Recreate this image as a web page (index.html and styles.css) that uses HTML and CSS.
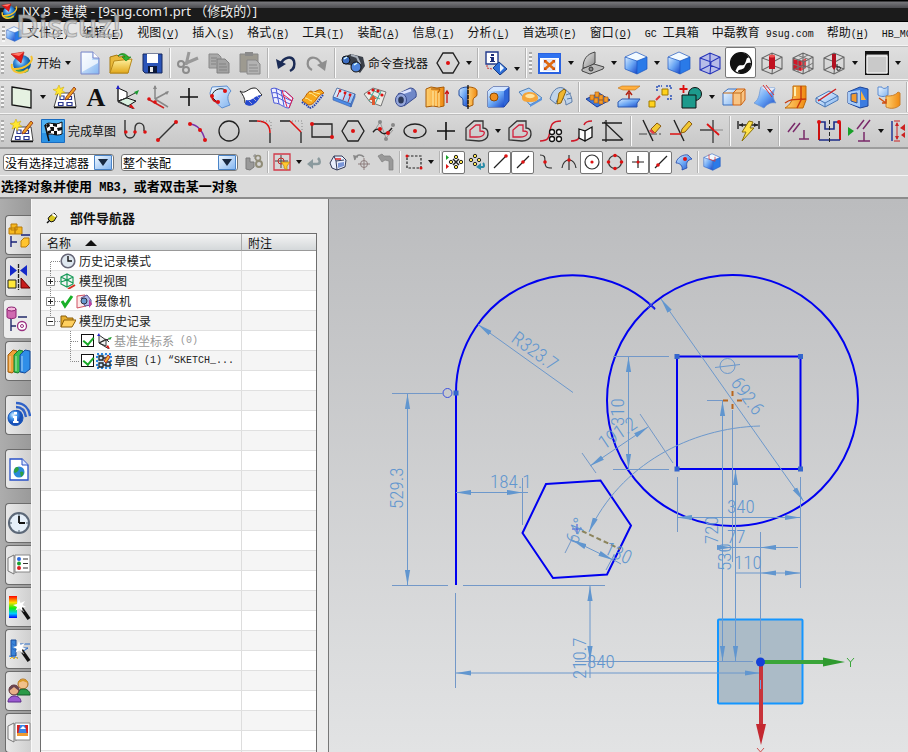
FILE: index.html
```html
<!DOCTYPE html>
<html lang="zh-CN">
<head>
<meta charset="utf-8">
<title>NX 8 - 建模</title>
<link rel="stylesheet" href="styles.css">
</head>
<body>
<svg class="defs" aria-hidden="true">
  <defs>
    <linearGradient id="gb" x1="0" y1="0" x2="1" y2="1"><stop offset="0" stop-color="#d8ecff"/><stop offset=".5" stop-color="#6aa6f4"/><stop offset="1" stop-color="#1746c8"/></linearGradient>
    <linearGradient id="gl" x1="0" y1="0" x2="1" y2="1"><stop offset="0" stop-color="#f4faff"/><stop offset="1" stop-color="#82b4f0"/></linearGradient>
    <linearGradient id="go" x1="0" y1="0" x2="1" y2="0"><stop offset="0" stop-color="#ffd070"/><stop offset="1" stop-color="#f08a10"/></linearGradient>
    <linearGradient id="gy" x1="0" y1="0" x2="0" y2="1"><stop offset="0" stop-color="#fff2a0"/><stop offset="1" stop-color="#e2a91c"/></linearGradient>
    <linearGradient id="gg" x1="0" y1="0" x2="1" y2="1"><stop offset="0" stop-color="#eee"/><stop offset="1" stop-color="#888"/></linearGradient>
    <linearGradient id="rain" x1="0" y1="0" x2="0" y2="1"><stop offset="0" stop-color="#f00"/><stop offset=".3" stop-color="#fd0"/><stop offset=".55" stop-color="#1e1"/><stop offset=".8" stop-color="#0cf"/><stop offset="1" stop-color="#00f"/></linearGradient>
    <radialGradient id="rb" cx=".35" cy=".3"><stop offset="0" stop-color="#dff2ff"/><stop offset=".5" stop-color="#4a9ef0"/><stop offset="1" stop-color="#1650b8"/></radialGradient>
    <radialGradient id="rg" cx=".4" cy=".35"><stop offset="0" stop-color="#d8f0ff"/><stop offset=".55" stop-color="#3a90e0"/><stop offset="1" stop-color="#0d5aa0"/></radialGradient>
    <symbol id="dd" viewBox="0 0 12 12"><path d="M3 4h6L6 8z" fill="#111"/></symbol>
    <symbol id="nx" viewBox="0 0 24 24"><circle cx="12" cy="13" r="9" fill="url(#rg)"/><path d="M6 18c3 3 8 4 12 1" stroke="#3eaa4a" stroke-width="2.500" fill="none"/><path d="M21 5c4 5-6 14-18 13M2 13c-2 8 9 12 16 5" stroke="#f6c22c" stroke-width="2" fill="none"/><path d="M1 3l13-2-3 11z" fill="#e01818" stroke="#a00c0c" stroke-width=".6"/><path d="M1 3l13-2-5 4z" fill="#ff7a6a"/></symbol>
    <symbol id="sk" viewBox="0 0 24 24"><path d="M5 8h16l2 14H1z" fill="#fff" stroke="#444" stroke-width="1"/><path d="M1 22.500h22" stroke="#111" stroke-width="1.500"/><path d="M7 11h4v3.500H7zM5.500 17.500h4.500v3H5.500zM14.500 11.500h4v3h-4zM14 17.500h5v3h-5z" fill="#fff" stroke="#2a3690" stroke-width="1.200"/><path d="M21 2l2 2-8 10-3 1 1-3z" fill="#f0a020" stroke="#8a2a10" stroke-width=".8"/><path d="M6 0l1.300 3.400L11 2 9 5.400l3 2-3.800.6L7.500 12 5.600 8.600 2 10l1.500-3.500L0 4.500l4-.5z" fill="#ffe630" stroke="#c9a400" stroke-width=".5"/></symbol>
    <symbol id="cube" viewBox="0 0 24 24"><path d="M1 6l11-5 11 5-10 4z" fill="#f2faff"/><path d="M1 6l12 4v13L1 18z" fill="url(#gb)"/><path d="M13 10l10-4v12l-10 5z" fill="#2a7ae8"/><path d="M1 6l11-5 11 5v12l-10 5-12-5zM1 6l12 4 10-4M13 10v13" fill="none" stroke="#1a55c0" stroke-width=".7"/></symbol>
    <symbol id="wire" viewBox="0 0 24 24"><path d="M2 7l10-5 10 4v12l-10 5-10-4zM2 7l11 4 9-5M13 11l-1 12M12 2v12M2 19l10-5 10 4" fill="none" stroke="currentColor" stroke-width="1.100"/></symbol>
    <symbol id="plus" viewBox="0 0 24 24"><path d="M12 3v18M3 12h18" stroke="#111" stroke-width="1.600"/></symbol>
    <symbol id="offc" viewBox="0 0 24 24"><path d="M1 21V9l8-7h9v7c4 0 5 3 5 6 0 5-5 7-9 7z" fill="none" stroke="#333" stroke-width="1.300"/><path d="M5 18v-7l6-5h4v6c4 0 5 1 4 3s-4 3-7 3z" fill="none" stroke="#d2203c" stroke-width="1.300"/></symbol>
    <symbol id="wand" viewBox="0 0 24 24"><path d="M13 8l9 13" stroke="#111" stroke-width="3.500"/><path d="M14 10l3 4" stroke="#999" stroke-width="1"/><path d="M12 1l1.500 4L18 3l-2.500 4L19 9l-4 .5.500 4-3.500-3-3.500 2L10 9 6 7l4-1z" fill="#fff"/></symbol>
  </defs>
</svg>

<header class="titlebar">
  <svg class="app-icon" viewBox="0 0 24 24"><use href="#nx"/></svg>
  <h1>NX 8 - 建模 - [9sug.com1.prt （修改的）]</h1>
  <span class="mark">Discuz!</span>
</header>

<nav class="menubar">
  <span class="grip"></span>
  <svg class="menu-icon" viewBox="0 0 24 24"><use href="#cube"/></svg>
  <button>文件<span>(<u>F</u>)</span></button>
  <button>编辑<span>(<u>E</u>)</span></button>
  <button>视图<span>(<u>V</u>)</span></button>
  <button>插入<span>(<u>S</u>)</span></button>
  <button>格式<span>(<u>R</u>)</span></button>
  <button>工具<span>(<u>T</u>)</span></button>
  <button>装配<span>(<u>A</u>)</span></button>
  <button>信息<span>(<u>I</u>)</span></button>
  <button>分析<span>(<u>L</u>)</span></button>
  <button>首选项<span>(<u>P</u>)</span></button>
  <button>窗口<span>(<u>O</u>)</span></button>
  <button><span>GC </span>工具箱</button>
  <button>中磊教育<span> 9sug.com</span></button>
  <button>帮助<span>(<u>H</u>)</span></button>
  <button><span>HB_MOULD</span></button>
</nav>

<div class="toolbar first">
  <span class="grip"></span>
  <button class="tool menu"><svg viewBox="0 0 24 24"><use href="#nx"/></svg>开始</button>
  <button class="drop" aria-label="开始菜单"><svg><use href="#dd"/></svg></button>
  <button class="tool" aria-label="新建"><svg viewBox="0 0 24 24"><path d="M3 1h12l6 6v16H3z" fill="url(#gl)" stroke="#7a86c8"/><path d="M4 2h10v7h6v3L4 21z" fill="#fff" opacity=".7"/><path d="M15 1v6h6" fill="#fff" stroke="#7a86c8"/></svg></button>
  <button class="tool" aria-label="打开"><svg viewBox="0 0 24 24"><path d="M1 22V6l7-2 2 2 9-1v17z" fill="#e9b93a" stroke="#a87a10"/><path d="M1 22l4-12 18-2-4 14z" fill="url(#gy)" stroke="#b8891a"/><path d="M9 5c3-4 8-3 10 1h3l-5 4-4-4h3c-1-2-4-3-7-1z" fill="#2eb030" stroke="#137a18" stroke-width=".6"/></svg></button>
  <button class="tool" aria-label="保存"><svg viewBox="0 0 24 24"><path d="M3 3h19v19H5l-2-2z" fill="#2b54b8" stroke="#16285e"/><path d="M7 3h11v9H7z" fill="#fff"/><path d="M8 15h9v7H8z" fill="#0c1838"/><path d="M10 16h3v5h-3z" fill="#e8e8e8"/></svg></button>
  <span class="sep"></span>
  <button class="tool" aria-label="剪切"><svg viewBox="0 0 24 24"><path d="M13 1L10 14M22 7L8 13" stroke="#999" stroke-width="3"/><circle cx="5" cy="13" r="3" fill="none" stroke="#8c8c8c" stroke-width="2"/><circle cx="10" cy="19" r="3" fill="none" stroke="#8c8c8c" stroke-width="2"/></svg></button>
  <button class="tool" aria-label="复制"><svg viewBox="0 0 24 24"><path d="M2 3h9l3 3v11H2z" fill="#a9a9a9" stroke="#8a8a8a"/><path d="M10 8h8l4 4v10H10z" fill="#a2a2a2" stroke="#808080"/><path d="M12 13h7M12 16h8M12 19h8M4 7h6M4 10h5M4 13h5" stroke="#838383"/></svg></button>
  <button class="tool" aria-label="粘贴"><svg viewBox="0 0 24 24"><path d="M2 3h18v18H2z" fill="#9d9a90" stroke="#888"/><path d="M7 1h8v4H7z" fill="#8a8a8a"/><path d="M9 9h9l4 4v10H9z" fill="#b2b2b2" stroke="#888"/><path d="M11 14h8M11 17h9M11 20h9" stroke="#8a8a8a"/></svg></button>
  <span class="sep"></span>
  <button class="tool" aria-label="撤消"><svg viewBox="0 0 24 24"><path d="M6 14C10 5 18 5 20 10c1 4 0 8-4 10" fill="none" stroke="#1b2b55" stroke-width="2.500"/><path d="M2 8l2 10 8-5z" fill="#1b2b55"/></svg></button>
  <button class="tool" aria-label="重做"><svg viewBox="0 0 24 24"><path d="M17 14C13 5 5 5 3 10c-1 4 0 7 4 9" fill="none" stroke="#8e8e8e" stroke-width="2.200"/><path d="M22 9l-2 11-8-6z" fill="#8e8e8e"/></svg></button>
  <span class="sep"></span>
  <button class="tool cmd"><svg viewBox="0 0 24 24"><path d="M2 6l8-3 12 3 2 9-5 7-6-5-4-3-7-1z" fill="#3a3f48"/><path d="M10 4l6 2 3 7" stroke="#aab2bd" stroke-width="2" fill="none"/><circle cx="5" cy="9" r="4" fill="#3c6cc0" stroke="#111"/><circle cx="15" cy="16" r="5" fill="#4f86dd" stroke="#111"/><path d="M3 8l3-2M13 14l3-2" stroke="#dff" stroke-width="1.500"/></svg>命令查找器</button>
  <button class="tool" aria-label="多边形"><svg viewBox="0 0 24 24"><path d="M1 12L7 2h10l6 10-6 10H7z" fill="none" stroke="#222" stroke-width="1.400"/><circle cx="12" cy="12" r="2" fill="#e01010"/></svg></button>
  <button class="drop" aria-label="更多"><svg><use href="#dd"/></svg></button>
  <span class="sep"></span>
  <button class="tool" aria-label="信息"><svg viewBox="0 0 24 24"><path d="M2 1h12v12H2z" fill="#fff" stroke="#223a8c" stroke-width="1.400"/><path d="M7 3h3v2H7zM6 6h4v4h1v1H6v-1h1V7H6z" fill="#1c2c78"/><path d="M3 14v3l5 1M14 12l2 2" stroke="#c33" stroke-dasharray="2 1" fill="none"/><path d="M15 11l8 7-7 6-7-7z" fill="#2f6fd8" stroke="#143a88"/><path d="M16 13l4 4-4 4z" fill="#e8f4ff"/></svg></button>
  <button class="drop low" aria-label="更多"><svg><use href="#dd"/></svg></button>
  <span class="sep"></span><span class="grip"></span>
  <button class="tool" aria-label="适合窗口"><svg viewBox="0 0 24 24"><path d="M1 3h21v19H1z" fill="#fff" stroke="#2a62e0" stroke-width="2"/><path d="M1 3h21v4H1z" fill="#2f72f0"/><path d="M5 8h13v12H5z" fill="#dfe6fa"/><path d="M7 10l9 8M16 10l-9 8" stroke="#e06a10" stroke-width="2.500"/><path d="M6 9h3l-3 3zM17 9v3l-3-3zM6 19v-3l3 3zM17 19h-3l3-3z" fill="#c84a08"/></svg></button>
  <button class="drop" aria-label="更多"><svg><use href="#dd"/></svg></button>
  <button class="tool" aria-label="定向视图"><svg viewBox="0 0 24 24"><path d="M2 17C2 8 6 3 14 1v11l-6 4z" fill="url(#gg)" stroke="#444"/><path d="M1 18l12-5 10 3-1 2-13 5-8-3z" fill="#bbb" stroke="#444"/><circle cx="10" cy="18" r="2" fill="#888" stroke="#333"/></svg></button>
  <button class="drop" aria-label="更多"><svg><use href="#dd"/></svg></button>
  <button class="tool" aria-label="带边着色"><svg viewBox="0 0 24 24"><use href="#cube"/></svg></button>
  <button class="drop" aria-label="更多"><svg><use href="#dd"/></svg></button>
  <button class="tool" aria-label="着色"><svg viewBox="0 0 24 24"><use href="#cube"/></svg></button>
  <button class="tool blue" aria-label="线框"><svg viewBox="0 0 24 24"><path d="M2 7l10-5 10 4v12l-10 5-10-4z" fill="#b7bce8"/><use href="#wire"/></svg></button>
  <button class="tool on" aria-label="艺术外观"><svg viewBox="0 0 24 24"><circle cx="12" cy="12" r="10.500" fill="#fff" stroke="#111" stroke-width="1.200"/><path d="M12 1.500a10.500 10.500 0 0 0-6 19c2-3 2-5 4-6 3-1 4 1 6-2 2-4 1-6 4-6a10.500 10.500 0 0 0-8-5z" fill="#111"/><path d="M9 21c0-4 6-1 7-6 1-3 3-4 6-3a10 10 0 0 1-10 10.500z" fill="#111"/></svg></button>
  <button class="tool gray" aria-label="面分析"><svg viewBox="0 0 24 24"><use href="#wire"/><path d="M9 5h6v13H9z" fill="#c01020"/><ellipse cx="12" cy="5" rx="3" ry="1.500" fill="#f05050"/></svg></button>
  <button class="tool gray" aria-label="局部着色"><svg viewBox="0 0 24 24"><path d="M2 8l8 2v10l-8-2z" fill="#d01828"/><path d="M10 10l5-3v10l-5 3z" fill="#e84a50"/><use href="#wire"/><path d="M7 4.500l11 4V21M7 9v12M2 13l11 4 9-5M17 4L7 9" fill="none" stroke="#777"/></svg></button>
  <button class="tool gray" aria-label="剖切"><svg viewBox="0 0 24 24"><use href="#wire"/><path d="M10 3h4v13l-2 3-2-3z" fill="#b01020"/><path d="M15 13v6c3 1 4-1 3-3h-3" fill="none" stroke="#222"/></svg></button>
  <button class="drop" aria-label="更多"><svg><use href="#dd"/></svg></button>
  <button class="tool" aria-label="背景"><svg viewBox="0 0 24 24"><path d="M.7.700h22.600v22.600H.7z" fill="#c9c9c9" stroke="#111" stroke-width="1.400"/><path d="M0 0h24v3.500H0z" fill="#111"/><path d="M2 5v17h20V5z" fill="none" stroke="#fff"/></svg></button>
  <button class="drop" aria-label="更多"><svg><use href="#dd"/></svg></button>
</div>

<div class="toolbar">
  <span class="grip"></span>
  <button class="tool" aria-label="基准平面"><svg viewBox="0 0 24 24"><path d="M2 2l19 3v18L2 20z" fill="#e6f2e2" stroke="#111" stroke-width="1.300"/></svg></button>
  <button class="drop" aria-label="更多"><svg><use href="#dd"/></svg></button>
  <button class="tool" aria-label="草图"><svg viewBox="0 0 24 24"><use href="#sk"/></svg></button>
  <button class="tool" aria-label="文本"><svg viewBox="0 0 24 24"><text x="12" y="21" text-anchor="middle" class="glyph">A</text></svg></button>
  <button class="tool" aria-label="基准坐标系"><svg viewBox="0 0 24 24"><path d="M3 3v13l9-3V7z" fill="#fff" stroke="#111"/><path d="M3 16l10 5 8-5-9-3z" fill="#d8f0e0" stroke="#111"/><path d="M3 17V1M3 17L22 7M3 17l16 7" stroke="#333" fill="none"/><path d="M1 4l2-4 2 4z" fill="#22c"/><path d="M19 7l5-2-2 5z" fill="#1a9a30"/><path d="M14 22l6 2-4-5z" fill="#d11"/></svg></button>
  <button class="tool" aria-label="基准轴"><svg viewBox="0 0 24 24"><path d="M9 14V1M9 14l13-7M9 14l13 8" stroke="#888" stroke-width="1.500"/><path d="M2 14l16 9" stroke="#c22" stroke-width="1.500"/><path d="M7 4l2-4 2 4zM19 7l4-1-2 4z" fill="#888"/><circle cx="3" cy="14" r="1.800" fill="#d11"/><circle cx="9" cy="17" r="1.800" fill="#d11"/></svg></button>
  <button class="tool" aria-label="点"><svg viewBox="0 0 24 24"><use href="#plus"/></svg></button>
  <button class="tool" aria-label="曲线"><svg viewBox="0 0 24 24"><path d="M4 2l15-1 4 5c-5 5-3 10-1 14l-8 3C8 18 2 12 2 8z" fill="url(#gl)" stroke="#5d8ed0"/><path d="M4 11c1-8 12-9 14-5M9 17l-6-6" fill="none" stroke="#222"/><path d="M4 11c0 4 3 6 6 6" stroke="#c11" stroke-width="2" fill="none"/><circle cx="4" cy="11" r="2" fill="#d11"/><circle cx="17" cy="6" r="2" fill="#d11"/><circle cx="10" cy="17" r="2" fill="#d11"/></svg></button>
  <button class="tool" aria-label="曲面"><svg viewBox="0 0 24 24"><path d="M1 6c5 4 8-3 14-3 4 0 4 3 8 7-3 1-5 4-7 7s-7 4-10 1c0-5-2-8-5-12z" fill="#fff" stroke="#222"/><path d="M7 15c6 2 9-5 15-5-2 5-5 8-8 10-3 1-6 1-8-1z" fill="#2548d0"/><path d="M10 16l3 3M14 13l3 3M18 11l2 2" stroke="#aac"/></svg></button>
  <button class="tool" aria-label="网格曲面"><svg viewBox="0 0 24 24"><path d="M1 4c6-3 8 3 14 2l8 7-4 10c-6 0-8-5-15-5z" fill="#eef"/><path d="M1 4c6-3 8 3 14 2l8 7-4 10c-6 0-8-5-15-5zM2 8c6-2 9 4 20 8M3 13c6-2 9 3 17 6M6 3l3 16M11 5l3 16" fill="none" stroke="#4a58d8"/><path d="M15 6l8 7-4 10M12 5l5 17M14 10l8 6" stroke="#e02050" fill="none"/></svg></button>
  <button class="tool" aria-label="扫掠"><svg viewBox="0 0 24 24"><path d="M1 15c4-2 4-8 9-9 4 3 6-2 10-1l3 3c-4 1-6 4-8 7s-4 5-8 5c-2-3-4-2-6-5z" fill="#f7a81c" stroke="#b86006"/><path d="M4 13c4 0 4 3 7 3M8 8c4 0 5 3 8 4M12 7c3 1 4 1 7 2" stroke="#fff0a0" fill="none"/><path d="M1 17c3 3 5 2 7 6 5 0 8-6 14-13" stroke="#2243b0" stroke-width="2" stroke-dasharray="1.500 1" fill="none"/></svg></button>
  <button class="tool" aria-label="通过曲线"><svg viewBox="0 0 24 24"><path d="M1 12L5 3l18 6-4 10z" fill="url(#gl)" stroke="#5a78a8"/><path d="M1 12l18 7v3L1 15zM19 19l4-10v3l-4 10z" fill="#4c8be8" stroke="#3a60a8" stroke-width=".6"/><path d="M8 5l-3 7M14 7l-3 8M19 9l-3 8" stroke="#b02030"/><g fill="#d11"><circle cx="8" cy="6" r="1.400"/><circle cx="13" cy="8" r="1.400"/><circle cx="18" cy="10" r="1.400"/></g></svg></button>
  <button class="tool" aria-label="N边曲面"><svg viewBox="0 0 24 24"><path d="M1 9l9-6 13 4-5 14-11-4z" fill="#ecebe6" stroke="#777"/><path d="M5 8l12 6M9 5l11 5M12 4l-6 12M18 6l-6 13" stroke="#4a9" fill="none"/><circle cx="6" cy="8" r="1.600" fill="#d11"/><circle cx="10" cy="5" r="1.600" fill="#d11"/><circle cx="15" cy="6" r="1.600" fill="#d11"/><circle cx="19" cy="10" r="1.600" fill="#d11"/><path d="M9 20v-5H6l4-5 4 4h-2v6z" fill="#e05a30"/></svg></button>
  <button class="tool" aria-label="管道"><svg viewBox="0 0 24 24"><path d="M4 9L16 3c5 0 7 4 6 9L10 21z" fill="#7088c8" stroke="#3a4c90"/><path d="M6 9l11-4" stroke="#dde4ff" stroke-width="2.500"/><ellipse cx="7" cy="15" rx="5.500" ry="6.500" fill="#96a8dc" stroke="#3a4c90"/><ellipse cx="7" cy="15" rx="2.800" ry="3.600" fill="#2c3858"/></svg></button>
  <button class="tool" aria-label="拉伸"><svg viewBox="0 0 24 24"><path d="M1 4l5-2 6 1 7-1v19l-5 1-6-1-7 1z" fill="url(#go)" stroke="#a85a06"/><path d="M8 6v15M11 6v15M14 7v15" stroke="#fff0b0"/><path d="M6 4h9l-2 4" stroke="#a85a06" fill="none"/><path d="M22 18V7M20 9l2-3 2 3" stroke="#c11" stroke-width="1.300" fill="none"/></svg></button>
  <button class="tool" aria-label="回转"><svg viewBox="0 0 24 24"><path d="M12 2C6 2 3 4 3 6v4c0 2 4 2 4 5v5l5 2z" fill="url(#gb)" stroke="#234a9a"/><path d="M12 2c6 0 9 2 9 4v4c0 2-4 2-4 5v5l-5 2z" fill="url(#go)" stroke="#a85a06"/><path d="M12 0v24" stroke="#111" stroke-width="1.300" stroke-dasharray="4 1"/></svg></button>
  <button class="tool" aria-label="孔"><svg viewBox="0 0 24 24"><path d="M1 6l5-4h16v14l-5 6H1z" fill="#2f66d8" stroke="#1a3c98"/><path d="M1 6h16v16H1z" fill="url(#gb)"/><path d="M1 6l5-4h16l-5 4z" fill="#d4e6ff"/><circle cx="7" cy="12" r="4" fill="#f09020" stroke="#8a4a08"/></svg></button>
  <button class="tool" aria-label="凸起"><svg viewBox="0 0 24 24"><path d="M1 7l10-4 13 10-12 7z" fill="#b4d4f6" stroke="#5080b8"/><path d="M12 20l12-7v2l-12 7z" fill="#5a94e0"/><path d="M4 13c0-4 3-6 8-6s8 3 8 6-3 4-8 4-8-1-8-4z" fill="#f5a53a"/><path d="M7 11c2-3 8-3 10 0-2 3-8 3-10 0z" fill="#ffe3a0"/></svg></button>
  <button class="tool" aria-label="筋板"><svg viewBox="0 0 24 24"><path d="M1 14C3 6 8 1 14 3c6 3 9 8 9 14l-6 3c0-6-4-9-7-7-2 1-3 4-3 6z" fill="#c0d4ea" stroke="#5c7ca8"/><path d="M10 8l5-4 2 2-5 12-4 1z" fill="#f0b630" stroke="#8c6208"/><path d="M17 10l5-2M18 14l5-1" stroke="#5c7ca8"/></svg></button>
  <span class="sep"></span>
  <button class="tool" aria-label="阵列特征"><svg viewBox="0 0 24 24"><path d="M0 14l13-6 11 7-13 7z" fill="#3a78e0" stroke="#1c3c98"/><path d="M4 10h4v5H4zM9 7h4v5H9zM8 13h4v5H8zM13 10h4v5h-4zM13 15h4v4h-4zM18 12h4v5h-4z" fill="#f39a2a" stroke="#a85a10" stroke-width=".6"/></svg></button>
  <button class="tool" aria-label="偏置面"><svg viewBox="0 0 24 24"><path d="M1 3l4-2h18l-5 4H6z" fill="#ffb040" stroke="#c07010" stroke-width=".6"/><path d="M12 14V8M9 10l3-4 3 4" stroke="#b02010" stroke-width="1.500" fill="none"/><path d="M1 17l4-3h18l-3 4v4H1z" fill="url(#gb)" stroke="#2a58b0"/></svg></button>
  <button class="tool" aria-label="阵列几何"><svg viewBox="0 0 24 24"><path d="M14 4h6v6h-6z" fill="#ffd21c" stroke="#a07a00"/><path d="M1 16h6v6H1z" fill="#ffd21c" stroke="#a07a00"/><path d="M8 15l4-4" stroke="#d33" stroke-width="2"/><path d="M9 6V1h5M18 1h5v4M23 10v4h-5" fill="none" stroke="#2a50b8" stroke-width="1.500" stroke-dasharray="2 1"/></svg></button>
  <button class="tool" aria-label="求和"><svg viewBox="0 0 24 24"><circle cx="16" cy="9" r="6.500" fill="#1d9a8c" stroke="#111"/><path d="M3 10h14v13H3z" fill="#1d9a8c" stroke="#111"/><path d="M4.500 0v8M.5 4h8" stroke="#d11" stroke-width="1.800"/></svg></button>
  <button class="drop" aria-label="更多"><svg><use href="#dd"/></svg></button>
  <button class="tool" aria-label="修剪体"><svg viewBox="0 0 24 24"><path d="M1 8l5-4h9v11l-4 5H1z" fill="url(#gl)" stroke="#3a70c0"/><path d="M11 8l4-4h8v11l-4 5h-8z" fill="#f8c484" stroke="#d06010"/><path d="M1 8h18v12M19 8l4-4" fill="none" stroke="#c06a18"/></svg></button>
  <button class="tool" aria-label="修剪片体"><svg viewBox="0 0 24 24"><path d="M1 18C7 14 6 7 8 2l14 1c-2 5-3 10 1 15-5-1-9 1-12 5z" fill="url(#gb)" stroke="#6a94d0" stroke-width=".7"/><path d="M8 2l14 1-5 5z" fill="#e4ecf8"/><path d="M10 0l9 12M13 0l8 10" stroke="#d33" fill="none"/></svg></button>
  <button class="tool" aria-label="边倒圆"><svg viewBox="0 0 24 24"><path d="M9 1h13v14l-3 8H1c5-3 8-8 8-14z" fill="url(#go)" stroke="#c06a08"/><path d="M17 1v14l-4 8M1 18c7-5 10-3 21-4" stroke="#c8380c" fill="none" stroke-width="1.400"/><path d="M11 2v9" stroke="#ffefb0" stroke-width="2"/></svg></button>
  <button class="tool" aria-label="抽壳"><svg viewBox="0 0 24 24"><path d="M1 13l13-7 9 5v4l-13 7-9-5z" fill="url(#gl)" stroke="#4878b8"/><path d="M1 13l9 5 13-7M10 18v4" stroke="#4878b8" fill="none"/><path d="M3 16L21 4" stroke="#d02020" stroke-width="1.500"/></svg></button>
  <button class="tool" aria-label="壳"><svg viewBox="0 0 24 24"><path d="M2 7l12-5 8 2v17l-8 2-12-5z" fill="#3c7ce0" stroke="#1c4498"/><path d="M2 7l12-2v17L2 18z" fill="#a8ccf8"/><path d="M5 9l6-1v10l-6-2z" fill="#f09a30" stroke="#2a50a0"/><path d="M15 6l5 9h-5z" fill="#f6b040"/></svg></button>
  <button class="tool" aria-label="加厚"><svg viewBox="0 0 24 24"><path d="M1 2h4c0 2 5 2 6-1v9c-3 2-7 2-10 0z" fill="url(#gl)" stroke="#5a8ad0"/><path d="M9 11c4 0 9 0 12-4l2 1v12c-4 4-10 4-14 2z" fill="url(#go)" stroke="#c88030"/><path d="M2 13l7 5M9 14v4H5" stroke="#d05010" stroke-width="1.500" fill="none"/></svg></button>
  <span class="sep"></span>
</div>

<div class="toolbar last">
  <span class="grip"></span>
  <button class="tool" aria-label="草图"><svg viewBox="0 0 24 24"><use href="#sk"/></svg></button>
  <button class="tool cmd"><svg viewBox="0 0 24 24"><path d="M.5.500h23v23H.5z" fill="#4fb2f2" stroke="#1a6cc0"/><path d="M1 14h22v9H1z" fill="#2b93e4"/><path d="M4 6c5-5 8 2 17-3v12c-7 3-10-2-14 1z" fill="#fff" stroke="#111"/><path d="M4 6l4 16" stroke="#111" stroke-width="1.500"/><path d="M5 6l3-2 1 3-3 2zM12 4l4 1v3l-4-1zM9 8l4 0v4l-3 0zM16 9l5-1v3l-4 1zM7 12l3-1v3l-3 1zM13 12h3v4h-3z" fill="#111"/></svg>完成草图</button>
  <button class="tool" aria-label="轮廓"><svg viewBox="0 0 24 24"><path d="M1 1v12c0 8 10 8 10 0V9c0-7 9-6 9 0v3" fill="none" stroke="#333" stroke-width="1.400"/><circle cx="1.800" cy="13" r="1.800" fill="#d11"/><circle cx="11" cy="13" r="1.800" fill="#d11"/><circle cx="21" cy="13" r="1.800" fill="#d11"/></svg></button>
  <button class="tool" aria-label="直线"><svg viewBox="0 0 24 24"><path d="M3 21L20 4" stroke="#333" stroke-width="1.500"/><circle cx="3" cy="21" r="2" fill="#d11"/><circle cx="21" cy="3" r="2" fill="#d11"/></svg></button>
  <button class="tool" aria-label="圆弧"><svg viewBox="0 0 24 24"><path d="M4 5c8 1 13 8 15 16" stroke="#7a30a8" stroke-width="1.500" fill="none"/><circle cx="4" cy="5" r="2" fill="#d11"/><circle cx="14" cy="11" r="2" fill="#d11"/><circle cx="19" cy="21" r="2" fill="#d11"/></svg></button>
  <button class="tool" aria-label="圆"><svg viewBox="0 0 24 24"><circle cx="12" cy="12" r="10" fill="none" stroke="#222" stroke-width="1.300"/></svg></button>
  <button class="tool" aria-label="圆角"><svg viewBox="0 0 24 24"><path d="M1 2h8M22 14v10" stroke="#222" stroke-width="1.300" fill="none"/><path d="M9 2c8 0 13 4 13 12" stroke="#d11" stroke-width="1.500" fill="none"/><path d="M12 2h11v9" stroke="#888" stroke-dasharray="1 2" fill="none"/></svg></button>
  <button class="tool" aria-label="倒斜角"><svg viewBox="0 0 24 24"><path d="M1 2h10M22 13v11" stroke="#222" stroke-width="1.300" fill="none"/><path d="M11 2l11 11" stroke="#d11" stroke-width="1.500" fill="none"/><path d="M13 2h10v9" stroke="#888" stroke-dasharray="1 2" fill="none"/></svg></button>
  <button class="tool" aria-label="矩形"><svg viewBox="0 0 24 24"><path d="M2 5h20v13H2z" stroke="#222" stroke-width="1.300" fill="none"/><circle cx="2" cy="5" r="2" fill="#d11"/><circle cx="22" cy="18" r="2" fill="#d11"/></svg></button>
  <button class="tool" aria-label="多边形"><svg viewBox="0 0 24 24"><path d="M1 12L7 2h10l6 10-6 10H7z" fill="none" stroke="#222" stroke-width="1.300"/><circle cx="12" cy="12" r="2" fill="#d11"/></svg></button>
  <button class="tool" aria-label="艺术样条"><svg viewBox="0 0 24 24"><path d="M1 14L8 3l6 16 7-8" stroke="#999" fill="none"/><path d="M1 13c5-6 6-1 9 1s6 0 10-5" stroke="#222" stroke-width="1.400" fill="none"/><circle cx="8" cy="3" r="2" fill="#888"/><circle cx="14" cy="20" r="2" fill="#888"/><circle cx="21" cy="6" r="2" fill="#888"/><circle cx="8" cy="10" r="2" fill="#d11"/><circle cx="16" cy="14" r="2" fill="#d11"/></svg></button>
  <button class="tool" aria-label="椭圆"><svg viewBox="0 0 24 24"><ellipse cx="12" cy="12" rx="11" ry="7" fill="none" stroke="#222" stroke-width="1.300"/><circle cx="12" cy="12" r="2" fill="#d11"/></svg></button>
  <button class="tool" aria-label="点"><svg viewBox="0 0 24 24"><use href="#plus"/></svg></button>
  <button class="tool" aria-label="偏置曲线"><svg viewBox="0 0 24 24"><use href="#offc"/></svg></button>
  <button class="drop" aria-label="更多"><svg><use href="#dd"/></svg></button>
  <button class="tool" aria-label="派生曲线"><svg viewBox="0 0 24 24"><use href="#offc"/></svg></button>
  <button class="tool" aria-label="阵列曲线"><svg viewBox="0 0 24 24"><path d="M1 22c9 0 9-4 10-10S13 2 22 2" stroke="#d01828" stroke-width="1.500" fill="none"/><g fill="#fff" stroke="#111" stroke-width="1.300"><circle cx="13" cy="13" r="2.500"/><circle cx="20" cy="13" r="2.500"/><circle cx="13" cy="20" r="2.500"/><circle cx="20" cy="20" r="2.500"/></g></svg></button>
  <button class="tool" aria-label="镜像曲线"><svg viewBox="0 0 24 24"><path d="M1 22c8 0 8-3 10-8M14 6c1-3 3-4 8-4" stroke="#d01828" stroke-width="1.500" fill="none"/><path d="M9 10l6 2v10l-6-3zM15 12l7-4v10l-7 4z" fill="#fff" stroke="#111" stroke-width="1.300"/></svg></button>
  <button class="tool" aria-label="相交曲线"><svg viewBox="0 0 24 24"><path d="M5 1v22M1 4h20M1 21h21M3 3l19 18" stroke="#222" stroke-width="1.300"/></svg></button>
  <span class="sep"></span>
  <button class="tool" aria-label="快速修剪"><svg viewBox="0 0 24 24"><path d="M5 1l10 21" stroke="#222" stroke-width="1.400"/><path d="M1 15h22" stroke="#444" stroke-dasharray="8 2"/><path d="M13 10l6-6 4 3-6 7z" fill="#f2c832" stroke="#8a5a10"/><path d="M13 10l4 4-2 1-4-3z" fill="#e2404a"/></svg></button>
  <button class="tool" aria-label="快速延伸"><svg viewBox="0 0 24 24"><path d="M5 1l10 21" stroke="#222" stroke-width="1.400"/><path d="M1 15h11" stroke="#d11" stroke-width="1.500"/><path d="M12 14l1-4 7-8 3 3-7 8z" fill="#f2c832" stroke="#8a5a10"/></svg></button>
  <button class="tool" aria-label="制作拐角"><svg viewBox="0 0 24 24"><path d="M13 1v23M0 11h14" stroke="#444" stroke-width="1.400"/><path d="M7 5l12 11" stroke="#d11" stroke-width="1.800"/><path d="M14 11h9" stroke="#888"/></svg></button>
  <span class="sep"></span>
  <button class="tool" aria-label="快速尺寸"><svg viewBox="0 0 24 24"><path d="M1 2v8M22 2v8M2 6h19" stroke="#222" stroke-width="1.400"/><path d="M2 6l4-2v4zM21 6l-4-2v4z" fill="#222"/><path d="M12 2l4 1-3 6h4L5 22l4-9H5z" fill="#ffe24a" stroke="#8a7008"/></svg></button>
  <button class="drop" aria-label="更多"><svg><use href="#dd"/></svg></button>
  <span class="sep"></span>
  <button class="tool" aria-label="约束"><svg viewBox="0 0 24 24"><path d="M2 13L9 4M7 13l7-9M13 20h10M18 11v9" stroke="#7a2a6a" stroke-width="1.500"/></svg></button>
  <button class="tool" aria-label="对称"><svg viewBox="0 0 24 24"><path d="M2 3v18M23 3v18" stroke="#c11" stroke-width="2" fill="none"/><path d="M3 3h5v7h9V3h5M2 21h21" stroke="#1c2c88" stroke-width="1.600" fill="none"/><path d="M12.500 1v23" stroke="#222" stroke-dasharray="4 2"/><circle cx="2" cy="3" r="2" fill="#d11"/><circle cx="22" cy="3" r="2" fill="#d11"/></svg></button>
  <button class="tool" aria-label="显示约束"><svg viewBox="0 0 24 24"><path d="M0 8l6 4-6 5z" fill="#18a028"/><path d="M9 10l7-9M15 10l7-9M10 22h12M16 13v9" stroke="#7a2a6a" stroke-width="1.500"/></svg></button>
  <button class="drop" aria-label="更多"><svg><use href="#dd"/></svg></button>
  <button class="tool" aria-label="动画尺寸"><svg viewBox="0 0 24 24"><path d="M1 2v20" stroke="#223a9a" stroke-width="1.500"/><path d="M3 2h6M3 22h6M6 4v16" stroke="#c22"/><path d="M4 7l2-4 2 4zM4 17l2 4 2-4zM9 9l5-4v7zM14 19l-4-3 4-3z" fill="#c22"/></svg></button>
</div>

<div class="selbar">
  <label class="combo filter"><select aria-label="选择过滤器"><option>没有选择过滤器</option></select><svg viewBox="0 0 18 15"><path d="M.5.500h17v14H.5z" fill="url(#gl)" stroke="#4a84c8"/><path d="M4 4h10l-5 7z" fill="#182840"/></svg></label>
  <label class="combo scope"><select aria-label="选择范围"><option>整个装配</option></select><svg viewBox="0 0 18 15"><path d="M.5.500h17v14H.5z" fill="url(#gl)" stroke="#4a84c8"/><path d="M4 4h10l-5 7z" fill="#182840"/></svg></label>
  <button class="snap" aria-label="装配选择"><svg viewBox="0 0 18 18"><path d="M1 5h4v4h4v5l-4 3-4-1z" fill="#999" stroke="#7a7a7a"/><path d="M8 3h4M10 1v5" stroke="#888"/><circle cx="13" cy="5" r="2.500" fill="none" stroke="#908c78" stroke-width="1.500"/><circle cx="14" cy="11" r="3" fill="none" stroke="#908c78" stroke-width="2"/></svg></button>
  <span class="sep"></span>
  <button class="snap" aria-label="选择优先级"><svg viewBox="0 0 18 18"><path d="M1 1h16v16H1z" fill="none" stroke="#d23a4a" stroke-width="1.300"/><path d="M8 2v13M2 8h13" stroke="#444"/><circle cx="8" cy="8" r="3" fill="none" stroke="#c22"/><path d="M8 9h9l-3 4v4l-3-2v-2z" fill="#ffc830" stroke="#a87808" stroke-width=".6"/></svg></button>
  <button class="drop small" aria-label="更多"><svg><use href="#dd"/></svg></button>
  <span class="quad">
    <button class="snap" aria-label="还原"><svg viewBox="0 0 18 18"><path d="M7 11h5c4 0 3-4 1-6" fill="none" stroke="#8b9a9e" stroke-width="2.500"/><path d="M2 11l6-5v10z" fill="#8b9a9e"/></svg></button>
    <button class="snap" aria-label="隐藏线"><svg viewBox="0 0 18 18"><path d="M1 10l4-7h8l4 4-1 7-8 3-5-2z" fill="#e8eefc" stroke="#333a58"/><path d="M5 3l2 5 8-1M7 8l1 9" stroke="#333a58" fill="none"/><path d="M6 6h6" stroke="#d22" stroke-width="1.500"/><path d="M9 10l6-1v4l-6 2z" fill="#7a96d8"/></svg></button>
    <button class="snap" aria-label="旋转点"><svg viewBox="0 0 18 18"><path d="M2 6c2-6 7-4 9-2M2 7L1 3l4 1" stroke="#888" stroke-width="1.500" fill="none"/><circle cx="11" cy="11" r="3.500" fill="none" stroke="#8c7c7c"/><path d="M11 5v12M5 11h12" stroke="#8c7c7c"/></svg></button>
    <button class="snap" aria-label="相切"><svg viewBox="0 0 18 18"><path d="M1 3l4-2 2 2h6l3 4v10h-4V8L8 7 5 9z" fill="#999" stroke="#808080" stroke-width=".7"/></svg></button>
  </span>
  <span class="sep"></span>
  <button class="snap" aria-label="矩形选择"><svg viewBox="0 0 18 18"><path d="M2 3h14v12H2z" fill="none" stroke="#222" stroke-width="1.200" stroke-dasharray="2.500 1.500"/><circle cx="2" cy="3" r="1.500" fill="#d11"/><circle cx="16" cy="15" r="1.500" fill="#d11"/></svg></button>
  <button class="drop" aria-label="更多"><svg><use href="#dd"/></svg></button>
  <span class="sep"></span>
  <button class="snap on" aria-label="启用捕捉点"><svg viewBox="0 0 18 18"><path d="M1 2l3 2.500L1 7z" fill="#18a028"/><path d="M1 11l3 2.500L1 16z" fill="#d11"/><g fill="#ffe650" stroke="#222"><circle cx="11" cy="4" r="1.700"/><circle cx="11" cy="14" r="1.700"/><circle cx="6" cy="9" r="1.700"/><circle cx="16" cy="9" r="1.700"/></g><path d="M8 6l6 6M14 6l-6 6" stroke="#222" stroke-width="1.500"/></svg></button>
  <button class="snap" aria-label="清除捕捉点"><svg viewBox="0 0 18 18"><g fill="#ffe650" stroke="#222"><circle cx="7" cy="3" r="1.700"/><circle cx="7" cy="11" r="1.700"/><circle cx="3" cy="7" r="1.700"/><circle cx="11" cy="7" r="1.700"/></g><path d="M12 14h2c3 0 2-3 1-4" fill="none" stroke="#2a8ca8" stroke-width="2"/><path d="M8 14l5-4v7z" fill="#2a8ca8"/></svg></button>
  <button class="snap on" aria-label="端点"><svg viewBox="0 0 18 18"><path d="M3 15L15 3" stroke="#222" stroke-width="1.300"/><circle cx="15" cy="3" r="1.800" fill="#d11"/></svg></button>
  <button class="snap on" aria-label="中点"><svg viewBox="0 0 18 18"><path d="M3 15L15 3" stroke="#222" stroke-width="1.300"/><circle cx="9" cy="9" r="1.800" fill="#d11"/></svg></button>
  <button class="snap" aria-label="控制点"><svg viewBox="0 0 18 18"><path d="M3 2c5 0 5 2 5 7s1 6 7 6" fill="none" stroke="#333" stroke-width="1.200"/><circle cx="8" cy="9" r="1.800" fill="#d11"/></svg></button>
  <button class="snap" aria-label="交点"><svg viewBox="0 0 18 18"><path d="M9 2v15M2 15C3 9 5 7 9 7s6 2 7 8" fill="none" stroke="#333" stroke-width="1.200"/><circle cx="9" cy="7" r="1.800" fill="#d11"/></svg></button>
  <button class="snap on" aria-label="圆弧中心"><svg viewBox="0 0 18 18"><circle cx="9" cy="9" r="7" fill="none" stroke="#333" stroke-width="1.200"/><circle cx="9" cy="9" r="1.600" fill="#d11"/></svg></button>
  <button class="snap" aria-label="象限点"><svg viewBox="0 0 18 18"><circle cx="9" cy="9" r="6.500" fill="none" stroke="#333" stroke-width="1.200"/><g fill="#d11"><circle cx="9" cy="2.500" r="1.800"/><circle cx="9" cy="15.500" r="1.800"/><circle cx="2.500" cy="9" r="1.800"/><circle cx="15.500" cy="9" r="1.800"/></g></svg></button>
  <button class="snap on" aria-label="现有点"><svg viewBox="0 0 18 18"><path d="M9 3v12M3 9h12" stroke="#222" stroke-width="1.200"/><circle cx="9" cy="9" r="1.500" fill="#d11"/></svg></button>
  <button class="snap on" aria-label="曲线上的点"><svg viewBox="0 0 18 18"><path d="M3 15L15 3" stroke="#222" stroke-width="1.200"/><circle cx="6" cy="12" r="1.800" fill="#d11"/></svg></button>
  <button class="snap" aria-label="面上的点"><svg viewBox="0 0 18 18"><path d="M1 10c1-6 8-9 12-8l4 4c-5 1-6 4-5 9l-5 2c1-4-2-7-6-7z" fill="url(#gb)" stroke="#2448a8" stroke-width=".8"/><circle cx="10" cy="6" r="2" fill="#d11"/></svg></button>
  <span class="sep"></span>
  <button class="snap" aria-label="有界栅格"><svg viewBox="0 0 24 24"><use href="#cube"/><path d="M8 2v6l8 3V5" stroke="#d33" fill="none"/></svg></button>
</div>

<p class="prompt">选择对象并使用<span> MB3</span>，或者双击某一对象</p>

<main>
  <aside class="rail">
    <button class="tab" aria-label="装配导航器"><svg viewBox="0 0 24 28"><path d="M4 3h6v6H4zM2 7h6v6H2zM8 6h7v7H8z" fill="#f6b820" stroke="#b87a08"/><path d="M4 15v11M4 21h6M14 14h9" stroke="#1a237a" stroke-width="1.400"/><path d="M14 20l3-3h5v6l-3 3h-5z" fill="#ffc42e" stroke="#b87a08"/></svg></button>
    <button class="tab" aria-label="约束导航器"><svg viewBox="0 0 24 28"><path d="M3 2v11l7-5.500zM20 2v11l-7-5.500z" fill="#1428c8"/><path d="M11.500 1v26" stroke="#222" stroke-width="1.300" stroke-dasharray="4 1"/><path d="M1 17h8v8H1z" fill="#ffe83a" stroke="#222"/><path d="M14 15l9 10h-9z" fill="#c81c1c" stroke="#600"/></svg></button>
    <button class="tab current" aria-label="部件导航器"><svg viewBox="0 0 24 28"><path d="M1 4v8c0 2 9 2 9 0V4z" fill="#d06ab0" stroke="#8a2070"/><ellipse cx="5.500" cy="4" rx="4.500" ry="2" fill="#f4b8dc" stroke="#8a2070"/><path d="M5 14v12M5 21h5M12 12h9" stroke="#222a6a" stroke-width="1.400"/><circle cx="16" cy="21" r="4.500" fill="#fff" stroke="#9a3080" stroke-width="1.300"/><circle cx="16" cy="21" r="1.500" fill="none" stroke="#9a3080"/></svg></button>
    <button class="tab end" aria-label="重用库"><svg viewBox="0 0 24 28"><path d="M1 8l5-5 4 1v18l-5 4-4-1z" fill="#f0a038" stroke="#a05a08"/><path d="M7 8l5-5 4 1v18l-5 4-4-1z" fill="#3cc050" stroke="#167a28"/><path d="M13 8l5-5 5 1v18l-5 4-5-1z" fill="#2f8ee8" stroke="#154a98"/><path d="M3 9v15M9 9v15M15 9v15" stroke="#fff" opacity=".6"/></svg></button>
    <button class="tab end" aria-label="HD3D 工具"><svg viewBox="0 0 24 28"><path d="M9 2c8 0 13 5 14 13M9 6c6 0 9 4 10 10M9 10c4 0 6 3 6 7" fill="none" stroke="#2f62c8" stroke-width="2.400"/><circle cx="8.500" cy="17" r="7.500" fill="url(#rb)" stroke="#1a56b8"/><path d="M7 11h3v2.500H7zM6 15h4v5h1.500v2H6v-2h1v-3H6z" fill="#fff"/></svg></button>
    <button class="tab end" aria-label="浏览器"><svg viewBox="0 0 24 28"><path d="M3 4h12l6 6v15H3z" fill="#fff" stroke="#2a52c8" stroke-width="1.300"/><path d="M15 4v6h6" fill="#dce8ff" stroke="#2a52c8"/><circle cx="12" cy="17" r="5.500" fill="#2a8ad8"/><path d="M8 13c3-3 5 1 3 3s-4 3-4 0zM13 17c4-2 5 2 1 5z" fill="#2ea040"/></svg></button>
    <button class="tab" aria-label="历史记录"><svg viewBox="0 0 24 28"><circle cx="12" cy="14" r="10" fill="#e6f0fa" stroke="#5c6878" stroke-width="2"/><path d="M12 14V7M12 14h6" stroke="#111" stroke-width="1.800"/><g fill="#345"><circle cx="12" cy="6" r=".8"/><circle cx="12" cy="22" r=".8"/><circle cx="4" cy="14" r=".8"/><circle cx="20" cy="14" r=".8"/></g></svg></button>
    <button class="tab" aria-label="系统材料"><svg viewBox="0 0 24 28"><path d="M1 7l6-3v19l-6-3zM7 6h2v16" fill="#f4f4f4" stroke="#777"/><path d="M8 4h15v17H8z" fill="#fff" stroke="#888"/><circle cx="12" cy="8" r="2" fill="#2a6ae0"/><circle cx="12" cy="12.500" r="2" fill="#1ca030"/><circle cx="12" cy="17" r="2" fill="#d82020"/><path d="M16 8h5M16 12.500h5M16 17h5" stroke="#333"/></svg></button>
    <button class="tab" aria-label="加工向导"><svg viewBox="0 0 24 28"><path d="M2 3h8v22H2z" fill="url(#rain)"/><svg x="0" y="3" width="22" height="22"><use href="#wand"/></svg></svg></button>
    <button class="tab" aria-label="过程向导"><svg viewBox="0 0 24 28"><path d="M4 5h5v16H4z" fill="#3a84d8" stroke="#1a4c98"/><path d="M4 8l5 3M4 13l5 3M2 21l9 2M12 9h11M13 13h8l-6 4" stroke="#2a6cc8" fill="none"/><path d="M3 24l2-2 2 2 2-2 2 2" stroke="#e8b820" fill="none"/><svg x="0" y="3" width="22" height="22"><use href="#wand"/></svg></svg></button>
    <button class="tab" aria-label="角色"><svg viewBox="0 0 24 28"><circle cx="16" cy="7" r="5" fill="#f2c08a" stroke="#a86a20"/><path d="M11 6c1-5 9-5 10 0l-5-2z" fill="#d89a28"/><path d="M10 18c0-8 13-8 13 0z" fill="#2a9a48" stroke="#155a28"/><circle cx="7" cy="13" r="5" fill="#e8b088" stroke="#5a3038"/><path d="M2 14c-1-8 11-8 10 0l-5-4z" fill="#6a4450"/><path d="M1 25c0-8 13-8 13 0z" fill="#9a5ad0" stroke="#5a2a88"/></svg></button>
    <button class="tab" aria-label="系统可视化"><svg viewBox="0 0 24 28"><path d="M1 7l6-3v19l-6-3zM7 6h2v16" fill="#f4f4f4" stroke="#777"/><path d="M8 4h15v17H8z" fill="#fff" stroke="#888"/><path d="M10 6h11v10H10z" fill="#d82020"/><path d="M13 6h5l2 10h-9z" fill="#3a84e8"/><path d="M13 10l3-3 3 3z" fill="#fff"/><path d="M10 14h11v3H10z" fill="#f09a30"/></svg></button>
  </aside>

  <section class="navigator">
    <h2><svg viewBox="0 0 12 12"><path d="M1 11l4-4" stroke="#111" stroke-width="1.500"/><path d="M3 5l5-4 3 3-3 5-3 1-3-3z" fill="#d8c820" stroke="#111"/><path d="M7 1l4 3-2 1-3-2z" fill="#fff"/></svg>部件导航器</h2>
    <table>
      <thead><tr><th>名称<svg class="asc" viewBox="0 0 12 6"><path d="M6 0l6 6H0z" fill="#111"/></svg></th><th>附注</th></tr></thead>
      <tbody>
        <tr><td><div class="node"><svg class="gut" viewBox="0 0 19 20"><path d="M9.500 20V10.500H19" class="dot"/></svg><svg class="ico" viewBox="0 0 16 16"><circle cx="8" cy="8" r="6.800" fill="#dfe8f0" stroke="#667" stroke-width="1.600"/><path d="M8 3v5h4" stroke="#111" stroke-width="1.400" fill="none"/></svg>历史记录模式</div></td><td></td></tr>
        <tr><td><div class="node"><svg class="gut" viewBox="0 0 19 20"><path d="M9.500 0v20M14 10.500h5" class="dot"/><path d="M5.500 6.500h8v8h-8z" class="box"/><path d="M7 10.500h5M9.500 8v5" class="sign"/></svg><svg class="ico" viewBox="0 0 16 16"><path d="M1 4l6-3 6 3v7l-6 3-6-3zM1 4l6 3 6-3M7 1v13M1 9l6-2 6 3" fill="none" stroke="#189a58" stroke-width="1.200"/><path d="M8 16l7-4" stroke="#d83020" stroke-width="2"/></svg>模型视图</div></td><td></td></tr>
        <tr><td><div class="node"><svg class="gut" viewBox="0 0 19 20"><path d="M9.500 0v20M14 10.500h5" class="dot"/><path d="M5.500 6.500h8v8h-8z" class="box"/><path d="M7 10.500h5M9.500 8v5" class="sign"/></svg><svg class="ico" viewBox="0 0 16 16"><path d="M2 8l3 5 7-10" stroke="#18b028" stroke-width="3" fill="none"/></svg><svg class="ico tight" viewBox="0 0 16 16"><path d="M1 3l8-1 1 11-9 2z" fill="#fde8e8" stroke="#d05060"/><path d="M5 5l6-3 4 5v5l-6 1z" fill="#b0b8e8" stroke="#5a5090"/><circle cx="8" cy="8" r="3" fill="#6a9ad0" stroke="#334"/><path d="M13 6l3 5-3 4z" fill="#c040a0"/></svg>摄像机</div></td><td></td></tr>
        <tr><td><div class="node"><svg class="gut" viewBox="0 0 19 20"><path d="M9.500 0v6M14 10.500h5" class="dot"/><path d="M5.500 6.500h8v8h-8z" class="box"/><path d="M7 10.500h5" class="sign"/></svg><svg class="ico" viewBox="0 0 16 16"><path d="M1 14V3h5l1 2h6v3" fill="#e8b030" stroke="#8a5c08"/><path d="M1 14l3-7h12l-4 7z" fill="#ffd060" stroke="#8a5c08"/></svg>模型历史记录</div></td><td></td></tr>
        <tr><td><div class="node muted"><svg class="gut deep" viewBox="0 0 40 20"><path d="M29.500 0v20M30 10.500h8" class="dot"/></svg><input type="checkbox" checked aria-label="基准坐标系"><svg class="ico" viewBox="0 0 16 16"><path d="M3 2v8l7 3V7zM3 10l7-4 3 3" fill="#eee" stroke="#333"/><path d="M3 10l12-5M3 10l10 6" stroke="#333"/><path d="M1 3l2-3 1 3z" fill="#22c"/><path d="M12 5l4-1-2 3z" fill="#2a3"/><path d="M10 14l4 2-2-4z" fill="#d11"/></svg>基准坐标系<span> (0)</span></div></td><td></td></tr>
        <tr><td><div class="node"><svg class="gut deep" viewBox="0 0 40 20"><path d="M29.500 0v10.500h9" class="dot"/></svg><input type="checkbox" checked aria-label="草图"><svg class="ico" viewBox="0 0 16 16"><path d="M1 1h14v14H1z" fill="#c8e4fc" stroke="#2a86e0" stroke-width="2" stroke-dasharray="2 2"/><path d="M3 3h4v4H3zM3 10h4v4H3zM10 9h4v4h-4zM7 5h4M7 12h3" fill="none" stroke="#222" stroke-width="1.300"/><path d="M8 8l4-6 2 2-4 6z" fill="#f0b030" stroke="#a33"/></svg>草图<span> (1) “SKETCH_...</span></div></td><td></td></tr>
        <tr><td></td><td></td></tr><tr><td></td><td></td></tr><tr><td></td><td></td></tr><tr><td></td><td></td></tr>
        <tr><td></td><td></td></tr><tr><td></td><td></td></tr><tr><td></td><td></td></tr><tr><td></td><td></td></tr>
        <tr><td></td><td></td></tr><tr><td></td><td></td></tr><tr><td></td><td></td></tr><tr><td></td><td></td></tr>
        <tr><td></td><td></td></tr><tr><td></td><td></td></tr><tr><td></td><td></td></tr><tr><td></td><td></td></tr>
        <tr><td></td><td></td></tr><tr><td></td><td></td></tr><tr><td></td><td></td></tr><tr><td></td><td></td></tr>
      </tbody>
    </table>
  </section>

  <section class="viewport">
    <svg viewBox="329 199 579 553" preserveAspectRatio="xMinYMin meet" role="img" aria-label="草图">
      <defs>
        <marker id="ah" viewBox="0 0 15 6" refX="15" refY="3" markerWidth="15" markerHeight="6" markerUnits="userSpaceOnUse" orient="auto-start-reverse"><path d="M0 .4L15 3 0 5.600z" fill="#6196cf"/></marker>
      </defs>
      <rect x="718" y="619.500" width="84.500" height="84" rx="1" class="datum"/>
      <g class="sketch">
        <path d="M456 585V393A117 117 0 0 1 655 309"/>
        <circle cx="732.500" cy="400.500" r="125.500"/>
        <path d="M677 356.500h123.500V469H677z"/>
        <path d="M546 484l54.500-3.500L631 525.500l-24 49-54 3.500-30.500-45z"/>
      </g>
      <g class="pts"><path d="M453.500 390.500h5v5h-5zM674.500 354h5v5h-5zM798 354h5v5h-5zM674.500 466.500h5v5h-5zM798 466.500h5v5h-5z"/></g>
      <path d="M649 303l6 7M655 301l-7 7" class="thinblue"/>
      <circle cx="447.500" cy="393" r="4.500" class="thinblue"/>
      <g class="ext">
        <path d="M392 393.500h51M392 585.500h56M463 585.500h142M522.500 478v47M455.500 593v95M613 356.500h56M613 469.500h56M582 453l14 20M640 414l33 49M707 400.500h17M732.500 410v152M677.500 477v55M800.500 477v111M760.500 532v122M575 661.500h178M565 553l8-16M606 570l8-15"/>
      </g>
      <g class="dim">
        <path d="M407.500 394v191" marker-start="url(#ah)" marker-end="url(#ah)"/>
        <path d="M456 492.500h66" marker-start="url(#ah)" marker-end="url(#ah)"/><path d="M522 492.500h6"/>
        <path d="M590 586v75" marker-start="url(#ah)" marker-end="url(#ah)"/><path d="M590 660v18"/>
        <path d="M456 673h304" marker-start="url(#ah)" marker-end="url(#ah)"/>
        <path d="M628.500 357v112" marker-start="url(#ah)" marker-end="url(#ah)"/>
        <path d="M590 466l58-39" marker-start="url(#ah)" marker-end="url(#ah)"/>
        <path d="M478 324.500l95 68" marker-start="url(#ah)"/>
        <path d="M661 299l142.500 202" marker-start="url(#ah)" marker-end="url(#ah)"/>
        <path d="M722.500 401v260" marker-start="url(#ah)" marker-end="url(#ah)"/>
        <path d="M735.500 470v191" marker-start="url(#ah)" marker-end="url(#ah)"/>
        <path d="M677 517.500h123" marker-start="url(#ah)" marker-end="url(#ah)"/>
        <path d="M717 547.500h15" marker-end="url(#ah)"/><path d="M732 547.500h28"/>
        <path d="M761 547.500h37" marker-start="url(#ah)"/>
        <path d="M735 573h26"/><path d="M761 573h39" marker-start="url(#ah)" marker-end="url(#ah)"/>
        <path d="M760 426C690 428 620 465 589 532" marker-end="url(#ah)"/>
        <path d="M572 540l41 20" marker-start="url(#ah)" marker-end="url(#ah)"/><path d="M612 559l9 5"/>
        <circle cx="727.500" cy="366" r="7.500"/><path d="M715 367.500l25-3"/>
      </g>
      <path d="M732.500 391v5M732.500 404v5M723 400.500h5M737 400.500h5" class="center"/>
      <path d="M582 531l38 18" class="axis-dash"/>
      <path d="M577 524v10M572 529h10" class="thinblue"/>
      <g class="num">
        <text x="490" y="488">184.1</text>
        <text transform="translate(403 509) rotate(-90)">529.3</text>
        <text transform="translate(586 679) rotate(-90)">210.7</text>
        <text x="587" y="668">840</text>
        <text transform="translate(624 426) rotate(-90)">310</text>
        <text transform="translate(604 450) rotate(-34)">191.2</text>
        <text transform="translate(510 341) rotate(36)">R323.7</text>
        <text transform="translate(730 383) rotate(54)">692.6</text>
        <text x="727" y="513">340</text>
        <text transform="translate(718 544) rotate(-90)">720</text>
        <text transform="translate(731 571) rotate(-90)">530</text>
        <text x="727" y="543">77</text>
        <text x="734" y="569">110</text>
        <text transform="translate(577 545) rotate(-66)">64°</text>
        <text transform="translate(603 553) rotate(25)">130</text>
      </g>
      <path d="M760.500 662h64" stroke="#3aa53a" stroke-width="4"/><path d="M823 657.500l22 4.500-22 4.500z" fill="#2f9a2f"/>
      <path d="M761 662v64" stroke="#c8333a" stroke-width="4"/><path d="M756 724h10l-5 21z" fill="#c42830"/>
      <path d="M760.500 680v9" stroke="#6aa0e0"/>
      <circle cx="760.500" cy="662" r="4.500" fill="#1440d8"/>
      <path d="M847 658l3.500 4 3.500-4M850.500 662v5" stroke="#3aa53a" fill="none"/>
      <path d="M757 748l7 8M764 748l-7 8" stroke="#d05050"/>
    </svg>
  </section>
</main>
</body>
</html>
```
FILE: styles.css
```css
* { box-sizing: border-box; }

body {
  margin: 0;
  height: 100vh;
  display: flex;
  flex-direction: column;
  overflow: hidden;
  background: #d9d9d9;
  color: #111;
  font: 12px/16px "Noto Sans CJK SC", sans-serif;
}

button {
  flex: none;
  margin: 0;
  padding: 0;
  border: 0;
  background: none;
  color: inherit;
  font: inherit;
  white-space: pre;
}

svg { display: block; flex: none; }
.defs { position: absolute; width: 0; height: 0; }

/* Title bar */
.titlebar {
  position: relative;
  flex: none;
  display: flex;
  align-items: center;
  gap: 4px;
  height: 22px;
  padding-left: 1px;
  background: linear-gradient(#000 0, #000 1px, #77777b 2px, #4c4c50 8px, #1b1b1b 8px, #1b1b1b 21px, #000 21px);
}
.app-icon { width: 17px; height: 17px; }
.titlebar h1 {
  margin: 0;
  color: #eee;
  font: 13px/22px "Noto Sans", "Noto Sans CJK SC", sans-serif;
  white-space: nowrap;
}
.mark {
  position: absolute;
  left: 16px;
  top: 8px;
  z-index: 2;
  color: rgba(205, 205, 205, .75);
  font: 600 31px/34px "Open Sans", sans-serif;
  -webkit-text-stroke: 1px rgba(140, 140, 140, .7);
}

/* Menu bar */
.menubar {
  flex: none;
  display: flex;
  align-items: center;
  gap: 13px;
  height: 23px;
  padding-left: 1px;
  background: #e6e6e6;
}
.menubar .grip { margin-right: -13px; }
.menu-icon { width: 16px; height: 16px; margin-right: -8px; }
.menubar span:not(.grip), .node span {
  font-family: "Liberation Mono", monospace;
  font-size: 10px;
}

.grip {
  flex: none;
  width: 5px;
  height: 22px;
  margin-right: 1px;
  background: repeating-linear-gradient(#aaa 0, #aaa 2px, #f6f6f6 2px, #f6f6f6 4px) 1px 0 / 3px 100% no-repeat;
}
.menubar .grip { height: 16px; }

/* Toolbars */
.toolbar {
  flex: none;
  display: flex;
  align-items: center;
  height: 34px;
  overflow: hidden;
  background: linear-gradient(#dfdfdf, #d2d2d2);
  border-top: 1px solid #f4f4f4;
  box-shadow: inset 0 1px #bcbcbc;
}
.toolbar.last {
  height: 36px;
  border-bottom: 2px solid #9c9c9c;
  background: linear-gradient(#d8d8d8, #c8c8c8);
}
.tool {
  display: flex;
  align-items: center;
  justify-content: center;
  width: 31px;
  height: 31px;
}
.tool svg { width: 24px; height: 24px; }
.tool.cmd, .tool.menu {
  justify-content: flex-start;
  gap: 3px;
  width: auto;
  padding: 0 4px;
}
.tool.menu { padding-right: 1px; }
.tool.on { border: 1px solid #777; border-radius: 2px; background: #fff; }
.tool.blue { color: #2432b8; }
.tool.gray { color: #666; }
.glyph { font: bold 26px "Liberation Serif", serif; fill: #111; }
.drop { width: 12px; height: 24px; display: grid; place-items: center; }
.drop svg { width: 12px; height: 12px; }
.drop.low { align-items: end; }
.drop.small { width: 9px; }
.sep {
  flex: none;
  width: 6px;
  height: 30px;
  background: linear-gradient(90deg, #b4b4b4 50%, #fafafa 50%) center / 2px 100% no-repeat;
}
.first .sep { width: 5px; }

/* Selection bar */
.selbar {
  flex: none;
  display: flex;
  align-items: center;
  height: 26px;
  padding-left: 3px;
  overflow: hidden;
  background: #d6d6d6;
}
.selbar .sep { width: 5px; height: 22px; }
.combo {
  flex: none;
  display: flex;
  align-items: center;
  height: 17px;
  margin-right: 7px;
  padding-right: 1px;
  border: 1px solid #777;
  border-radius: 3px;
  background: #fff;
}
.filter { width: 111px; }
.scope { width: 117px; margin-right: 4px; }
.combo select {
  flex: 1;
  min-width: 0;
  height: 15px;
  padding: 0 0 0 1px;
  border: 0;
  appearance: none;
  background: none;
  color: #000;
  font: 12px/15px "Noto Sans CJK SC", sans-serif;
}
.combo svg { width: 18px; height: 15px; }
.snap {
  display: grid;
  place-items: center;
  width: 23px;
  height: 23px;
}
.snap svg { width: 18px; height: 18px; }
.snap.on { border: 1px solid #777; border-radius: 2px; background: #fff; }
.quad { display: flex; gap: 1px; }

.prompt {
  flex: none;
  height: 24px;
  margin: 0;
  padding-left: 1px;
  border-top: 1px solid #f4f4f4;
  border-bottom: 2px solid #8c8c8c;
  background: #dadada;
  color: #000;
  font-weight: 700;
  font-size: 13px;
  line-height: 20px;
  white-space: pre;
}
.prompt span { font: bold 12px "Liberation Mono", monospace; }

/* Work area */
main { flex: 1; min-height: 0; display: flex; overflow: hidden; }

.rail {
  flex: none;
  width: 31px;
  padding: 16px 0 0 5px;
  display: flex;
  flex-direction: column;
  align-items: flex-end;
  gap: 2px;
  background: linear-gradient(90deg, #adadad, #9a9a9a);
}
.tab {
  flex: none;
  display: grid;
  place-items: center;
  width: 26px;
  height: 40px;
  border: 1px solid #6c6c6c;
  border-right: 0;
  border-radius: 4px 0 0 4px;
  background: linear-gradient(90deg, #e8e8e8, #cfcfcf);
}
.tab.current { width: 28px; background: #ececec; border-color: #999; }
.tab.end { margin-bottom: 12px; }
.tab svg { width: 24px; height: 28px; }

.navigator {
  flex: none;
  width: 298px;
  padding: 0 11px 0 8px;
  border-left: 1px solid #f8f8f8;
  border-right: 1px solid #777;
  background: #ececec;
}
.navigator h2 {
  display: flex;
  align-items: center;
  gap: 12px;
  height: 34px;
  margin: 0;
  padding: 4px 0 0 6px;
  font-size: 13px;
  line-height: 20px;
}
.navigator h2 svg { width: 12px; height: 12px; }
table {
  width: 100%;
  border-collapse: separate;
  border-spacing: 0;
  table-layout: fixed;
  border: 1px solid #6e6e6e;
  background: #fff;
}
th {
  height: 17px;
  padding: 0 0 0 6px;
  border-right: 1px solid #aaa;
  border-bottom: 1px solid #999;
  background: linear-gradient(#f4f4f4, #d4d8da);
  font-weight: 400;
  line-height: 15px;
  text-align: left;
}
th:first-child { width: 201px; }
th:last-child, td:last-child { border-right: 0; }
.asc { display: inline-block; width: 12px; height: 6px; margin-left: 14px; vertical-align: 2px; }
td {
  height: 20px;
  padding: 0;
  border-right: 1px solid #ddd;
  border-bottom: 1px solid #e0e0e0;
}
tbody tr:nth-child(even) { background: #f5f5f5; }
.node { display: flex; align-items: center; height: 19px; color: #222; white-space: pre; }
.node.muted { color: #999; }
.gut { width: 19px; height: 20px; }
.gut.deep { width: 40px; }
.ico { width: 16px; height: 16px; margin-right: 3px; }
.ico.tight { margin-left: -3px; }
.dot { fill: none; stroke: #888; stroke-dasharray: 1 1; }
.box { fill: #fff; stroke: #888; }
.sign { fill: none; stroke: #222; }
.node input {
  position: relative;
  flex: none;
  width: 13px;
  height: 13px;
  margin: 0 2px 0 0;
  appearance: none;
  border: 1px solid #111;
  background: #fff;
}
.node input + .ico { margin-right: 2px; }
.node input:checked::before {
  content: "";
  position: absolute;
  left: 3px;
  top: 0;
  width: 5px;
  height: 8px;
  border: solid #18a828;
  border-width: 0 2px 2px 0;
  transform: rotate(40deg);
}

.viewport {
  flex: 1;
  min-width: 0;
  background: linear-gradient(#bbbcbe, #e2e3e4);
}
.viewport > svg { width: 100%; height: 100%; }
.sketch { fill: none; stroke: #0000f0; stroke-width: 2; }
.pts { fill: #3466cc; }
.thinblue { fill: none; stroke: #3a4fe0; }
.ext { fill: none; stroke: #7398c8; }
.dim { fill: none; stroke: #6c98cc; }
.center { stroke: #b8651c; stroke-width: 2; }
.axis-dash { stroke: #8c845c; stroke-width: 2; stroke-dasharray: 5 3; }
.datum { fill: #abbbc7; stroke: #1496ff; stroke-width: 2; }
.num {
  fill: #6196cf;
  font: 300 19px "Liberation Sans Narrow", "Roboto Condensed", "Open Sans Condensed", Lato, sans-serif;
}
```
